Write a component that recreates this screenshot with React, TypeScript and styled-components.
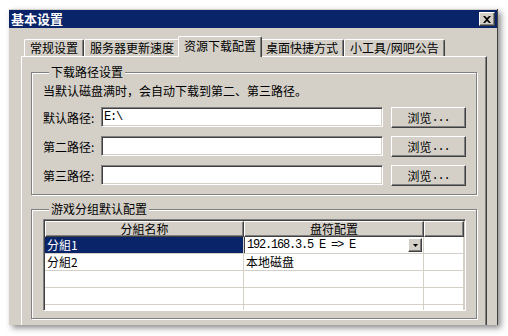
import styled, { createGlobalStyle } from "styled-components";

const GlobalStyle = createGlobalStyle`
  html, body {
    margin: 0;
    padding: 0;
    background: #ffffff;
  }
  body {
    font-family: "Noto Sans CJK SC", "Noto Sans", sans-serif;
    font-size: 12px;
    color: #000;
  }
`;

const tabs = ["常规设置", "服务器更新速度", "资源下载配置", "桌面快捷方式", "小工具/网吧公告"];
const paths = [
  { label: "默认路径:", value: "E:\\" },
  { label: "第二路径:", value: "" },
  { label: "第三路径:", value: "" },
];
const groups = [
  { name: "分組1", drive: "192.168.3.5 E => E", selected: true },
  { name: "分組2", drive: "本地磁盘", selected: false },
  { name: "", drive: "", selected: false },
  { name: "", drive: "", selected: false },
  { name: "", drive: "", selected: false },
];

export default function App() {
  return (
    <>
      <GlobalStyle />
      <Page>
        <Window>
          <TitleBar>
            <Title>基本设置</Title>
            <CloseButton>
              <svg width="8" height="7" viewBox="0 0 8 7">
                <path d="M0 0h2l2 2 2-2h2L5 3.5 8 7H6L4 5 2 7H0l3-3.5z" fill="#000" />
              </svg>
            </CloseButton>
          </TitleBar>
          <Body>
            <TabRow>
              {tabs.map((t, i) => (
                <Tab key={t} $active={i === 2}>
                  {t}
                </Tab>
              ))}
            </TabRow>
            <Panel>
              <Group>
                <Legend>下载路径设置</Legend>
                <Hint>当默认磁盘满时，会自动下载到第二、第三路径。</Hint>
                {paths.map((p) => (
                  <PathRow key={p.label}>
                    <PathLabel>{p.label}</PathLabel>
                    <PathInput>{p.value}</PathInput>
                    <Button>
                      浏览<Dots>...</Dots>
                    </Button>
                  </PathRow>
                ))}
              </Group>
              <Group $second>
                <Legend>游戏分组默认配置</Legend>
                <ListView>
                  <HeaderCell>分組名称</HeaderCell>
                  <HeaderCell>盘符配置</HeaderCell>
                  <HeaderCell />
                  {groups.map((g, i) => (
                    <Row key={i}>
                      <Cell $selected={g.selected}>{g.name}</Cell>
                      {g.selected ? (
                        <Cell>
                          <Combo>
                            <ComboText>{g.drive}</ComboText>
                            <ComboButton>
                              <svg width="5" height="3" viewBox="0 0 5 3">
                                <path d="M0 0h5L2.5 3z" fill="#000" />
                              </svg>
                            </ComboButton>
                          </Combo>
                        </Cell>
                      ) : (
                        <Cell>{g.drive}</Cell>
                      )}
                      <Cell />
                    </Row>
                  ))}
                </ListView>
              </Group>
            </Panel>
          </Body>
        </Window>
      </Page>
    </>
  );
}

const Page = styled.div`
  width: 508px;
  height: 336px;
  padding: 9px 0 0 9px;
  box-sizing: border-box;
  overflow: hidden;
`;

const Window = styled.div`
  width: 489px;
  height: 316px;
  box-sizing: border-box;
  background: #d4d0c8;
  border-right: 1px solid #404040;
  box-shadow: 3px 3px 6px rgba(0, 0, 0, 0.45);
  display: flex;
  flex-direction: column;
  overflow: hidden;
`;

const TitleBar = styled.div`
  height: 18px;
  margin-top: 1px;
  background: #0a246a;
  display: flex;
  align-items: center;
  justify-content: space-between;
  padding: 0 2px 0 2px;
`;

const Title = styled.div`
  color: #fff;
  font-weight: bold;
  font-size: 13px;
  line-height: 18px;
`;

const CloseButton = styled.div`
  width: 16px;
  height: 14px;
  box-sizing: border-box;
  background: #d4d0c8;
  border-top: 1px solid #fff;
  border-left: 1px solid #fff;
  border-right: 1px solid #404040;
  border-bottom: 1px solid #404040;
  box-shadow: inset -1px -1px 0 #808080;
  display: flex;
  align-items: center;
  justify-content: center;
`;

const Body = styled.div`
  flex: 1;
  display: flex;
  flex-direction: column;
  padding: 9px 10px 0 12px;
  min-height: 0;
`;

const TabRow = styled.div`
  display: flex;
  align-items: flex-end;
  height: 20px;
  padding-left: 3px;
  position: relative;
  z-index: 1;
  margin-bottom: -1px;
`;

const Tab = styled.div<{ $active?: boolean }>`
  height: ${(p) => (p.$active ? 21 : 17)}px;
  margin: ${(p) => (p.$active ? "0 -2px" : "0 0 1px 0")};
  padding: 0 5px;
  box-sizing: border-box;
  background: #d4d0c8;
  border-top: 1px solid #fff;
  border-left: 1px solid #fff;
  border-right: 1px solid #404040;
  box-shadow: inset -1px 0 0 #808080;
  border-radius: 2px 2px 0 0;
  line-height: ${(p) => (p.$active ? 18 : 15)}px;
  white-space: nowrap;
  position: relative;
  z-index: ${(p) => (p.$active ? 2 : 1)};
`;

const Panel = styled.div`
  flex: 1;
  border-top: 1px solid #fff;
  border-left: 1px solid #fff;
  border-right: 1px solid #404040;
  box-shadow: inset -1px 0 0 #808080;
  padding: 8px 9px 0 9px;
  display: flex;
  flex-direction: column;
`;

const Group = styled.fieldset<{ $second?: boolean }>`
  margin: ${(p) => (p.$second ? "7px" : "0")} 0 0 0;
  padding: ${(p) => (p.$second ? "3px 10px 7px 11px" : "5px 10px 8px 11px")};
  border: 1px solid #808080;
  box-shadow: 1px 1px 0 #fff, inset 1px 1px 0 #fff;
  min-width: 0;
  display: flex;
  flex-direction: column;
`;

const Legend = styled.legend`
  padding: 0 2px;
  margin-left: 6px;
  line-height: 14px;
  background: #d4d0c8;
`;

const Hint = styled.div`
  line-height: 14px;
  margin-bottom: 9px;
  white-space: nowrap;
`;

const PathRow = styled.div`
  display: flex;
  align-items: center;
  height: 21px;
  & + & {
    margin-top: 8px;
  }
`;

const PathLabel = styled.div`
  width: 58px;
  white-space: nowrap;
`;

const PathInput = styled.div`
  width: 282px;
  height: 20px;
  box-sizing: border-box;
  background: #fff;
  border-top: 1px solid #808080;
  border-left: 1px solid #808080;
  border-right: 1px solid #fff;
  border-bottom: 1px solid #fff;
  box-shadow: inset 1px 1px 0 #404040, inset -1px -1px 0 #d4d0c8;
  padding: 0 2px;
  font-family: "Liberation Mono", monospace;
  font-size: 12px;
  letter-spacing: -1.2px;
  line-height: 18px;
  align-self: flex-start;
`;

const Button = styled.div`
  width: 75px;
  height: 21px;
  margin-left: 8px;
  box-sizing: border-box;
  background: #d4d0c8;
  border-top: 1px solid #fff;
  border-left: 1px solid #fff;
  border-right: 1px solid #404040;
  border-bottom: 1px solid #404040;
  box-shadow: inset -1px -1px 0 #808080;
  display: flex;
  align-items: center;
  justify-content: center;
  line-height: 18px;
`;

const Dots = styled.span`
  font-family: "Liberation Mono", monospace;
  font-size: 12px;
  letter-spacing: -1.2px;
`;

const ListView = styled.div`
  height: 92px;
  box-sizing: border-box;
  background: #fff;
  border-top: 1px solid #808080;
  border-left: 1px solid #808080;
  border-right: 1px solid #fff;
  border-bottom: 1px solid #fff;
  box-shadow: inset 1px 1px 0 #404040, inset -1px -1px 0 #d4d0c8;
  padding: 1px;
  display: grid;
  grid-template-columns: 199px 180px 1fr;
  grid-auto-rows: 17px;
  grid-template-rows: 16px;
  overflow: hidden;
`;

const HeaderCell = styled.div`
  background: #d4d0c8;
  box-sizing: border-box;
  border-top: 1px solid #fff;
  border-left: 1px solid #fff;
  border-right: 1px solid #404040;
  border-bottom: 1px solid #404040;
  box-shadow: inset -1px -1px 0 #808080;
  text-align: center;
  line-height: 14px;
`;

const Row = styled.div`
  display: contents;
`;

const Cell = styled.div<{ $selected?: boolean }>`
  box-sizing: border-box;
  border-right: 1px solid #d4d0c8;
  border-bottom: 1px solid #d4d0c8;
  background: ${(p) => (p.$selected ? "#0a246a" : "#fff")};
  color: ${(p) => (p.$selected ? "#fff" : "#000")};
  padding-left: 2px;
  line-height: 16px;
  white-space: nowrap;
  overflow: hidden;
  display: flex;
  align-items: stretch;
`;

const Combo = styled.div`
  flex: 1;
  margin-left: -2px;
  display: flex;
  align-items: center;
  border-left: 1px solid #404040;
  padding: 0 1px 0 2px;
  background: #fff;
`;

const ComboText = styled.div`
  flex: 1;
  font-family: "Liberation Mono", monospace;
  font-size: 12px;
  letter-spacing: -1.2px;
`;

const ComboButton = styled.div`
  width: 14px;
  height: 14px;
  box-sizing: border-box;
  background: #d4d0c8;
  border-top: 1px solid #fff;
  border-left: 1px solid #fff;
  border-right: 1px solid #404040;
  border-bottom: 1px solid #404040;
  box-shadow: inset -1px -1px 0 #808080;
  display: flex;
  align-items: center;
  justify-content: center;
`;
